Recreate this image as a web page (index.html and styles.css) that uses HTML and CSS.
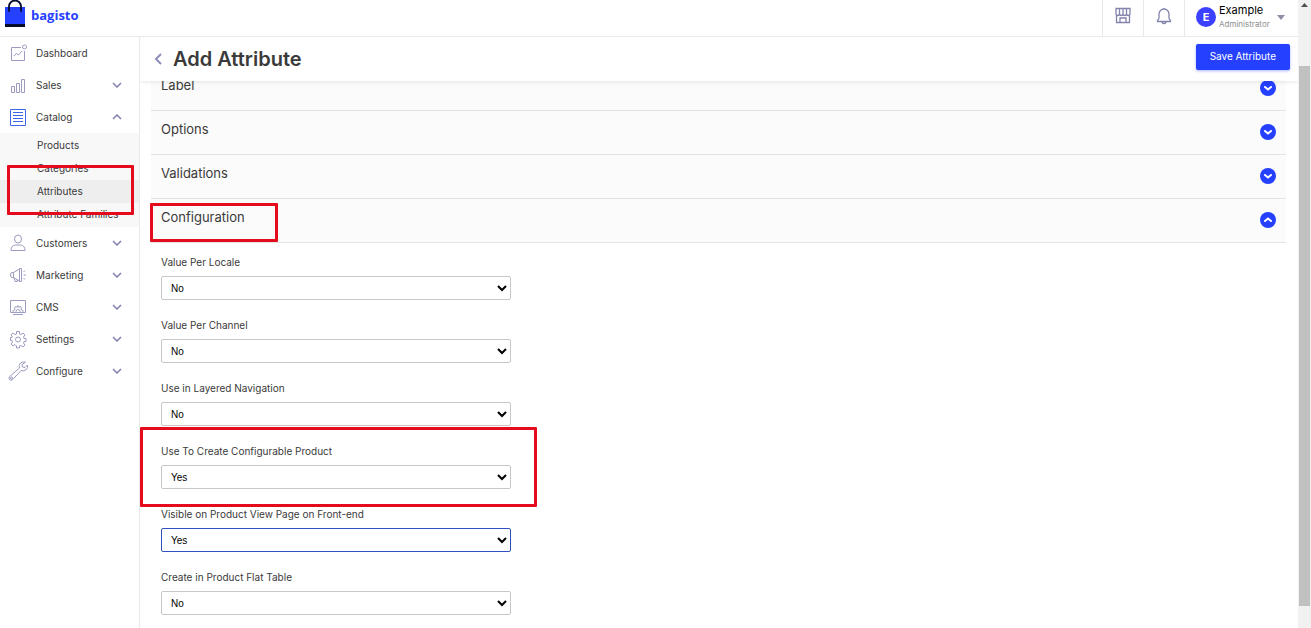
FILE: index.html
```html
<!DOCTYPE html>
<html lang="en">
<head>
    <meta charset="UTF-8">
    <meta name="viewport" content="width=device-width, initial-scale=1.0">
    <title>Add Attribute</title>
    <link rel="stylesheet" href="styles.css">
</head>
<body>
    <svg class="symbols" aria-hidden="true">
        <symbol id="chevron" viewBox="0 0 10 6"><path d="M1 1l4 4 4-4"/></symbol>
        <symbol id="toggle" viewBox="0 0 16 16"><circle cx="8" cy="8" r="8" fill="#2540ff"/><path d="M5 7l3 2.500 3-2.500" fill="none" stroke="#fff" stroke-width="2" stroke-linecap="round"/></symbol>
    </svg>

    <div class="app">
        <header class="navbar-top">
            <a class="brand" href="#">
                <svg width="22" height="28" viewBox="0 0 22 28">
                    <path d="M1 7h20v18H1z" fill="#2540ff"/>
                    <path d="M1 24h20v3H1z" fill="#060b2c"/>
                    <path d="M5 11V6.500a6 6 0 0 1 12 0V11" fill="none" stroke="#060b2c" stroke-width="1.800" stroke-linecap="round"/>
                </svg>
                <span>bagisto</span>
            </a>
            <div class="navbar-right">
                <a class="top-link store" href="#" aria-label="Visit shop">
                    <svg class="icon" width="18" height="18" viewBox="0 0 18 18"><path d="M2 1.500h14v5q0 2-1.750 2T12.500 6.500q0 2-1.750 2T9 6.500q0 2-1.750 2T5.500 6.500q0 2-1.750 2T2 6.500zM5.500 1.500v5M9 1.500v5M12.500 1.500v5M2.500 8.500v7h13v-7M6 15.500V11h6v4.500"/></svg>
                </a>
                <a class="top-link bell" href="#" aria-label="Notifications">
                    <svg class="icon" width="18" height="18" viewBox="0 0 18 18"><path d="M9 1v1M9 2a5 5 0 0 0-5 5v4q0 1-1.500 2.500v1h13v-1Q14 12 14 11V7a5 5 0 0 0-5-5zM7 14.500a2 2 0 0 0 4 0"/></svg>
                </a>
                <button class="profile" type="button">
                    <span class="avatar">E</span>
                    <span class="profile-info">
                        <span class="name">Example</span>
                        <span class="role">Administrator</span>
                    </span>
                    <svg width="8" height="5" viewBox="0 0 8 5"><path d="M0 0h8L4 5z" fill="#8e8ea5"/></svg>
                </button>
            </div>
        </header>

        <div class="wrapper">
            <nav class="sidebar">
                <ul class="menu">
                    <li><a href="#">
                        <svg class="icon" width="20" height="20" viewBox="0 0 20 20"><path d="M13 4.500H3.500v13h13V8M6 13l2.500-2.500 2 1.500 3.500-4"/><circle cx="16.500" cy="4" r="2"/></svg>
                        <span>Dashboard</span>
                    </a></li>
                    <li><a href="#">
                        <svg class="icon" width="20" height="20" viewBox="0 0 20 20"><path d="M3.500 11.500h3v6h-3zM8.500 8.500h3v9h-3zM13.500 4.500h3v13h-3z"/></svg>
                        <span>Sales</span>
                        <svg class="arrow"><use href="#chevron"/></svg>
                    </a></li>
                    <li class="active">
                        <a href="#">
                            <svg class="icon" width="20" height="20" viewBox="0 0 20 20"><path d="M2.500 2.500h15v16h-15z"/><path d="M5 5.500h10M5 8.500h10M5 11.500h10M5 14.500h10"/></svg>
                            <span>Catalog</span>
                            <svg class="arrow up"><use href="#chevron"/></svg>
                        </a>
                        <ul class="submenu">
                            <li><a href="#">Products</a></li>
                            <li><a href="#">Categories</a></li>
                            <li class="current"><a href="#">Attributes</a><span class="mark mark-menu"></span></li>
                            <li><a href="#">Attribute Families</a></li>
                        </ul>
                    </li>
                    <li><a href="#">
                        <svg class="icon" width="20" height="20" viewBox="0 0 20 20"><ellipse cx="10" cy="6" rx="3.500" ry="4"/><path d="M3 17.500q0-5 4.500-5.500h5q4.500.5 4.500 5.500z"/></svg>
                        <span>Customers</span>
                        <svg class="arrow"><use href="#chevron"/></svg>
                    </a></li>
                    <li><a href="#">
                        <svg class="icon" width="20" height="20" viewBox="0 0 20 20"><path d="M5.500 7.500H4Q2.500 7.500 2.500 10T4 12.500h1.500zM5.500 7.500l6-3.500M5.500 12.500l6 3.500M11.500 3.500h2v13h-2zM6 13l1 3.500h2.500L9 14.500M15.500 10H18M15.500 7L17 5.500M15.500 13l1.500 1.500"/></svg>
                        <span>Marketing</span>
                        <svg class="arrow"><use href="#chevron"/></svg>
                    </a></li>
                    <li><a href="#">
                        <svg class="icon" width="20" height="20" viewBox="0 0 20 20"><path d="M5 15.500H2.500v-12h15v12H15M5 17.500h10M5 15.500v-2l1.500-.5.5-1-.5-1.500L8 9.500l1 1V9h2v1.500l1-1 1.500 1-.5 1.500.5 1 1.500.5v2zM8 15.500v-1a2 2 0 0 1 4 0v1"/></svg>
                        <span>CMS</span>
                        <svg class="arrow"><use href="#chevron"/></svg>
                    </a></li>
                    <li><a href="#">
                        <svg class="icon" width="20" height="20" viewBox="0 0 20 20"><path d="M8.500 2.500h3V5l1.500.5 2-1.500 2 2-1.500 2 .5 1.500h2v3h-2l-.5 1.500 1.500 2-2 2-2-1.500-1.500.5v2h-3v-2L7 15.500 5 17l-2-2 1.500-2-.5-1.500H2.500v-3H4L4.500 8 3 6l2-2 2 1.500L8.500 5z"/><circle cx="10" cy="10.500" r="2.500"/></svg>
                        <span>Settings</span>
                        <svg class="arrow"><use href="#chevron"/></svg>
                    </a></li>
                    <li><a href="#">
                        <svg class="icon" width="20" height="20" viewBox="0 0 20 20"><path d="M17.500 1.200q-3.500-1-5.500 1.300-1.500 2-.5 4.500L1.700 15.500q-1.500 1.500-.2 3.200 1.800 1.300 3.300-.2L13 9.500q3 1 5.200-.8Q20 7 19.500 4L17 6.500l-2.500-.5-.500-2.500z"/><circle cx="3.500" cy="17" r="1"/></svg>
                        <span>Configure</span>
                        <svg class="arrow"><use href="#chevron"/></svg>
                    </a></li>
                </ul>
            </nav>

            <main class="content">
                <div class="page-header">
                    <a class="back" href="#" aria-label="Back"><svg width="8" height="12" viewBox="0 0 8 12"><path d="M7 1L2 6l5 5" fill="none" stroke="#8e8eb8" stroke-width="2"/></svg></a>
                    <h1>Add Attribute</h1>
                    <button class="btn-primary" type="submit" form="attribute-form">Save Attribute</button>
                </div>

                <form class="page-content" id="attribute-form">
                    <button class="accordion" type="button">Label<svg class="toggle"><use href="#toggle"/></svg></button>
                    <button class="accordion" type="button">Options<svg class="toggle"><use href="#toggle"/></svg></button>
                    <button class="accordion" type="button">Validations<svg class="toggle"><use href="#toggle"/></svg></button>
                    <button class="accordion" type="button">Configuration<svg class="toggle up"><use href="#toggle"/></svg><span class="mark mark-title"></span></button>

                    <div class="accordion-content">
                        <div class="control-group">
                            <label for="value_per_locale">Value Per Locale</label>
                            <select id="value_per_locale"><option>No</option><option>Yes</option></select>
                        </div>
                        <div class="control-group">
                            <label for="value_per_channel">Value Per Channel</label>
                            <select id="value_per_channel"><option>No</option><option>Yes</option></select>
                        </div>
                        <div class="control-group">
                            <label for="is_filterable">Use in Layered Navigation</label>
                            <select id="is_filterable"><option>No</option><option>Yes</option></select>
                        </div>
                        <div class="control-group">
                            <label for="is_configurable">Use To Create Configurable Product</label>
                            <select id="is_configurable"><option>No</option><option selected>Yes</option></select>
                            <span class="mark mark-field"></span>
                        </div>
                        <div class="control-group">
                            <label for="is_visible_on_front">Visible on Product View Page on Front-end</label>
                            <select class="focused" id="is_visible_on_front"><option>No</option><option selected>Yes</option></select>
                        </div>
                        <div class="control-group">
                            <label for="use_in_flat">Create in Product Flat Table</label>
                            <select id="use_in_flat"><option>No</option><option>Yes</option></select>
                        </div>
                    </div>
                </form>
            </main>
        </div>
    </div>

    <div class="scrollbar">
        <svg width="7" height="4" viewBox="0 0 7 4"><path d="M0 4h7L3.500 0z" fill="#505050"/></svg>
        <div class="thumb"></div>
    </div>
</body>
</html>
```
FILE: styles.css
```css
* {
    box-sizing: border-box;
}

body {
    margin: 0;
    display: flex;
    height: 100vh;
    overflow: hidden;
    background: #fff;
    color: #3a3a3a;
    font-family: Inter, sans-serif;
    font-size: 10px;
}

a {
    color: inherit;
    text-decoration: none;
}

button {
    font-family: inherit;
    cursor: pointer;
}

ul {
    list-style: none;
    margin: 0;
    padding: 0;
}

.symbols {
    display: none;
}

.icon {
    flex: none;
    fill: none;
    stroke: #9c9cc0;
    stroke-width: 1;
}

.app {
    flex: 1;
    min-width: 0;
    display: flex;
    flex-direction: column;
}

/* top bar */
.navbar-top {
    flex: none;
    display: flex;
    justify-content: space-between;
    height: 37px;
    border-bottom: 1px solid #e9e9e9;
}

.brand {
    display: flex;
    align-items: flex-start;
    gap: 5px;
    padding-left: 4px;
    color: #2540ff;
    font-family: "Open Sans", sans-serif;
    font-size: 13px;
    font-weight: 700;
    line-height: 30px;
}

.navbar-right {
    display: flex;
}

.top-link {
    display: flex;
    justify-content: center;
    width: 41px;
    padding-top: 7px;
    border-left: 1px solid #e9e9e9;
}

.top-link .icon {
    stroke: #8383ad;
    stroke-width: 1.3;
}

.profile {
    display: flex;
    align-items: flex-start;
    gap: 3px;
    padding: 4px 13px 0 11px;
    border: 0;
    border-left: 1px solid #e9e9e9;
    background: none;
    text-align: left;
}

.profile svg {
    margin-top: 11px;
}

.avatar {
    width: 20px;
    height: 20px;
    margin-top: 3px;
    border-radius: 50%;
    background: #3c41ff;
    color: #fff;
    font-size: 11px;
    font-weight: 700;
    line-height: 20px;
    text-align: center;
}

.profile-info {
    display: flex;
    flex-direction: column;
    width: 55px;
}

.name {
    color: #000;
    font-size: 11px;
    line-height: 13px;
}

.role {
    color: #8e8e8e;
    font-size: 8px;
    line-height: 14px;
}

/* sidebar */
.wrapper {
    flex: 1;
    min-height: 0;
    display: flex;
}

.sidebar {
    flex: none;
    width: 140px;
    border-right: 1px solid #e9e9e9;
}

.menu > li > a {
    display: flex;
    align-items: center;
    gap: 8px;
    height: 32px;
    padding: 0 17px 1px 8px;
}

.active > a .icon {
    stroke: #3f66e8;
}

.arrow {
    width: 10px;
    height: 6px;
    margin-left: auto;
    fill: none;
    stroke: #8080ae;
    stroke-width: 1.5;
}

.up {
    transform: rotate(180deg);
}

.submenu {
    padding: 1px 0;
    background: #f8f8f8;
}

.submenu li {
    position: relative;
}

.submenu a {
    display: block;
    padding-left: 37px;
    line-height: 23px;
}

.submenu .current {
    background: #eee;
}

/* page */
.content {
    flex: 1;
    min-width: 0;
    overflow: hidden;
}

.page-header {
    position: relative;
    z-index: 2;
    display: flex;
    align-items: center;
    gap: 11px;
    height: 44px;
    padding: 0 8px 0 14px;
    background: #fff;
    box-shadow: 0 1px 4px rgba(0, 0, 0, 0.1);
}

.page-header h1 {
    margin: 0;
    font-size: 20px;
    font-weight: 600;
}

.back {
    display: flex;
}

.btn-primary {
    height: 26px;
    margin: 0 0 5px auto;
    padding: 0 14px 1px;
    border: 0;
    border-radius: 2px;
    background: #2540ff;
    color: #fff;
    font-size: 10px;
    box-shadow: 0 1px 3px rgba(37, 64, 255, 0.4);
}

/* the panels are scrolled a little way under the page header */
.page-content {
    margin-top: -14px;
    padding: 0 12px 0 11px;
}

.accordion {
    position: relative;
    display: flex;
    justify-content: space-between;
    align-items: center;
    width: 100%;
    height: 44px;
    padding: 0 10px 8px;
    border: 0;
    border-bottom: 1px solid #e4e4e4;
    background: #fbfbfb;
    color: #3a3a3a;
    font-size: 13px;
    line-height: 16px;
}

.toggle {
    width: 16px;
    height: 16px;
    margin-top: 7px;
}

.accordion-content {
    padding: 11px 10px 0;
}

.control-group {
    position: relative;
    width: 350px;
    margin-bottom: 17px;
}

.control-group label {
    display: block;
    margin-bottom: 6px;
    line-height: 16px;
}

.control-group select {
    display: block;
    width: 100%;
    height: 24px;
    padding: 0 5px;
    border: 1px solid #c7c7c7;
    border-radius: 2px;
    background: #fff;
    color: #000;
    font-family: "Liberation Sans", Arial, sans-serif;
    font-size: 10px;
}

.control-group select.focused {
    border-color: #3050c0;
}

/* red callout frames */
.mark {
    position: absolute;
    z-index: 1;
    border: 3px solid #e30b1c;
    border-radius: 1px;
    pointer-events: none;
}

.mark-menu {
    inset: -15px 5px -12px 7px;
}

.mark-title {
    top: 4px;
    left: -1px;
    width: 128px;
    height: 39px;
}

.mark-field {
    inset: -16px -26px -18px -21px;
}

/* scrollbar */
.scrollbar {
    flex: none;
    display: flex;
    flex-direction: column;
    align-items: center;
    width: 13px;
    padding: 3px 1px 22px;
    background: #f1f1f1;
}

.thumb {
    flex: 1;
    width: 100%;
    margin-top: 59px;
    background: #c1c1c1;
}
```
